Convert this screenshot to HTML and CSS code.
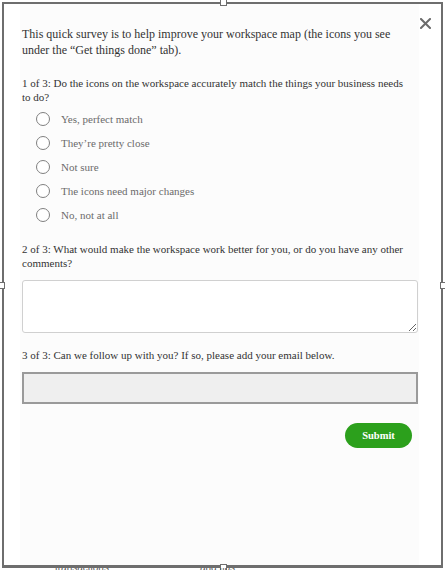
FILE: index.html
```html
<!DOCTYPE html>
<html>
<head>
<meta charset="utf-8">
<link rel="stylesheet" href="styles.css">
</head>
<body>
<div class="stage">
  <div class="frame">
    <div class="modal">
      <button class="close" aria-label="Close">
        <svg width="11" height="11" viewBox="0 0 11 11"><path d="M1 1L10 10M10 1L1 10" stroke="#6b6b6b" stroke-width="2" stroke-linecap="square"/></svg>
      </button>
      <p class="intro">This quick survey is to help improve your workspace map (the icons you see under the “Get things done” tab).</p>
      <p class="question q1">1 of 3: Do the icons on the workspace accurately match the things your business needs to do?</p>
      <ul class="options">
        <li class="option"><span class="radio"></span><span>Yes, perfect match</span></li>
        <li class="option"><span class="radio"></span><span>They’re pretty close</span></li>
        <li class="option"><span class="radio"></span><span>Not sure</span></li>
        <li class="option"><span class="radio"></span><span>The icons need major changes</span></li>
        <li class="option"><span class="radio"></span><span>No, not at all</span></li>
      </ul>
      <p class="question q2">2 of 3: What would make the workspace work better for you, or do you have any other comments?</p>
      <textarea class="comments"></textarea>
      <p class="question q3">3 of 3: Can we follow up with you? If so, please add your email below.</p>
      <div class="email"></div>
      <div class="actions"><button class="submit">Submit</button></div>
    </div>
    <span class="handle h-top"></span>
    <span class="handle h-left"></span>
    <span class="handle h-right"></span>
    <span class="handle h-bottom"></span>
  </div>
  <div class="under"><span class="under-a">transactions</span><span class="under-b">and tips</span></div>
</div>
</body>
</html>
```
FILE: styles.css
```css
html, body {
  margin: 0;
  padding: 0;
  background: #ffffff;
}
.stage {
  width: 445px;
  height: 570px;
  overflow: hidden;
  position: relative;
  font-family: "Liberation Serif", "Times New Roman", serif;
}
.frame {
  position: relative;
  margin: 2px 2px 0 2px;
  width: 437px;
  height: 561px;
  border: 2px solid #6e6e6e;
  border-bottom-width: 3px;
  background: #ffffff;
}
.modal {
  position: relative;
  height: 100%;
  margin: 0 22px 0 16px;
  padding: 22px 2px 0 2px;
  background: #fcfcfc;
  box-sizing: border-box;
}
.close {
  position: absolute;
  top: 12px;
  right: -14px;
  width: 15px;
  height: 15px;
  padding: 0;
  border: 0;
  background: transparent;
  display: flex;
  align-items: center;
  justify-content: center;
}
.intro {
  margin: 0;
  width: 382px;
  font-size: 12px;
  line-height: 16px;
  color: #333;
}
.question {
  margin: 0;
  width: 386px;
  font-size: 11px;
  line-height: 14px;
  color: #333;
}
.q1 { margin-top: 18px; }
.options {
  list-style: none;
  margin: 3px 0 0 0;
  padding: 0;
  display: flex;
  flex-direction: column;
}
.option {
  display: flex;
  align-items: center;
  height: 24px;
  padding-left: 14px;
  gap: 11px;
  font-size: 11px;
  color: #6b6b6b;
}
.radio {
  width: 12px;
  height: 12px;
  border: 1.5px solid #808080;
  border-radius: 50%;
  background: #fff;
  flex: none;
}
.q2 { margin-top: 15px; }
.comments {
  display: block;
  margin-top: 10px;
  width: 396px;
  height: 53px;
  box-sizing: border-box;
  border: 1px solid #d0d0d0;
  border-radius: 3px;
  background: #fff;
  resize: both;
}
.q3 { margin-top: 15px; }
.email {
  margin-top: 10px;
  width: 396px;
  height: 32px;
  box-sizing: border-box;
  border: 2px solid #9a9a9a;
  background: #efefef;
}
.actions {
  display: flex;
  justify-content: flex-end;
  margin-top: 19px;
  padding-right: 5px;
}
.submit {
  width: 67px;
  height: 25px;
  border: 0;
  border-radius: 13px;
  background: #2ca01c;
  color: #fff;
  font-family: "Liberation Serif", "Times New Roman", serif;
  font-weight: bold;
  font-size: 10.5px;
  padding: 0;
}
.handle {
  position: absolute;
  width: 5px;
  height: 5px;
  background: #fff;
  border: 1px solid #6e6e6e;
}
.h-top { top: -5px; left: 216px; }
.h-bottom { bottom: -6px; left: 216px; }
.h-left { left: -6px; top: 278px; }
.h-right { right: -6px; top: 278px; }
.under {
  height: 4px;
  overflow: hidden;
  position: relative;
  font-family: "Liberation Sans", Arial, sans-serif;
  font-size: 10px;
  line-height: 4px;
  color: #555;
}
.under-a { position: absolute; left: 55px; top: -2px; }
.under-b { position: absolute; left: 200px; top: -2px; }
```
